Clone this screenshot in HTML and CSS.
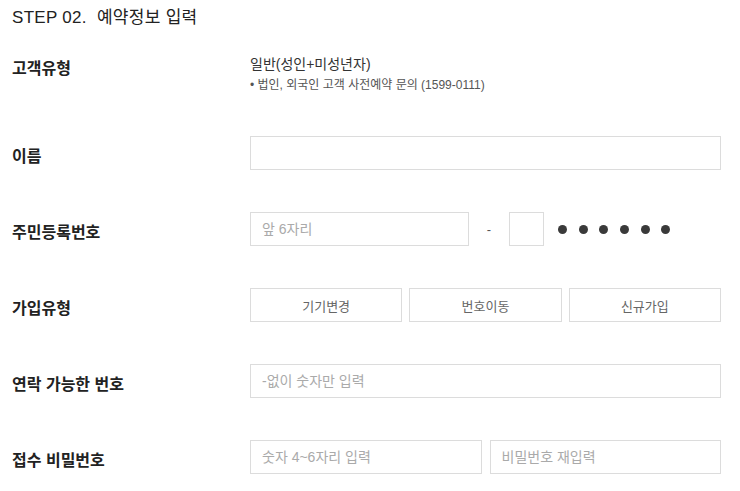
FILE: index.html
```html
<!DOCTYPE html>
<html lang="ko">
<head>
<meta charset="utf-8">
<title>STEP 02. 예약정보 입력</title>
<link rel="stylesheet" href="styles.css">
</head>
<body>
<h2 class="title">STEP 02.&nbsp; 예약정보 입력</h2>
<div class="form">
  <div class="row row-type">
    <div class="label">고객유형</div>
    <div class="field">
      <div class="value">일반(성인+미성년자)</div>
      <div class="note">• 법인, 외국인 고객 사전예약 문의 (1599-0111)</div>
    </div>
  </div>
  <div class="row">
    <div class="label">이름</div>
    <div class="field"><input class="input" type="text"></div>
  </div>
  <div class="row">
    <div class="label">주민등록번호</div>
    <div class="field jumin">
      <input class="input front" type="text" placeholder="앞 6자리">
      <span class="dash">-</span>
      <input class="input one" type="text">
      <span class="dots"><i></i><i></i><i></i><i></i><i></i><i></i></span>
    </div>
  </div>
  <div class="row">
    <div class="label">가입유형</div>
    <div class="field choices">
      <button class="choice" type="button">기기변경</button>
      <button class="choice" type="button">번호이동</button>
      <button class="choice" type="button">신규가입</button>
    </div>
  </div>
  <div class="row">
    <div class="label">연락 가능한 번호</div>
    <div class="field"><input class="input" type="text" placeholder="-없이 숫자만 입력"></div>
  </div>
  <div class="row">
    <div class="label">접수 비밀번호</div>
    <div class="field pw">
      <input class="input" type="password" placeholder="숫자 4~6자리 입력">
      <input class="input" type="password" placeholder="비밀번호 재입력">
    </div>
  </div>
</div>
</body>
</html>
```
FILE: styles.css
```css
* { box-sizing: border-box; }
html, body { background: #fff; }
body {
  margin: 0;
  padding: 8px 12px;
  font-family: "Liberation Sans", "Noto Sans CJK KR", sans-serif;
  color: #222;
}
.title {
  margin: 0;
  font-size: 17px;
  line-height: 20px;
  font-weight: normal;
  color: #222;
  letter-spacing: 0.3px;
}
.form { display: flex; flex-direction: column; }
.row {
  display: grid;
  grid-template-columns: 238px 471px;
  align-items: center;
  margin-top: 42px;
  min-height: 34px;
}
.row-type {
  align-items: start;
  margin-top: 27px;
}
.row-type + .row { margin-top: 43px; }
.row-type .label { padding-top: 2px; }
.label {
  font-family: "Noto Sans CJK KR", sans-serif;
  font-size: 16px;
  font-weight: bold;
  line-height: 20px;
  color: #222;
  padding-top: 3px;
}
.value {
  font-size: 14px;
  line-height: 18px;
  color: #333;
}
.note {
  margin-top: 4px;
  font-size: 12px;
  line-height: 16px;
  color: #555;
}
.input {
  display: block;
  width: 100%;
  height: 34px;
  border: 1px solid #dcdcdc;
  background: #fff;
  padding: 0 11px;
  font-family: "Liberation Sans", "Noto Sans CJK KR", sans-serif;
  font-size: 14px;
  color: #333;
  outline: none;
}
.input::placeholder { color: #aaa; }
.jumin { display: flex; align-items: center; }
.jumin .front { width: 219px; }
.dash {
  width: 40px;
  text-align: center;
  font-size: 13px;
  color: #555;
}
.jumin .one { width: 35px; }
.dots { display: flex; gap: 11.7px; margin-left: 14px; }
.dots i {
  display: block;
  width: 9px;
  height: 9px;
  border-radius: 50%;
  background: #3a3a3a;
}
.choices {
  display: grid;
  grid-template-columns: repeat(3, 1fr);
  gap: 7px;
}
.choice {
  height: 34px;
  border: 1px solid #dcdcdc;
  background: #fff;
  font-family: "Noto Sans CJK KR", sans-serif;
  font-size: 13px;
  color: #666;
  padding: 0;
}
.pw {
  display: grid;
  grid-template-columns: 1fr 1fr;
  gap: 8px;
}
```
